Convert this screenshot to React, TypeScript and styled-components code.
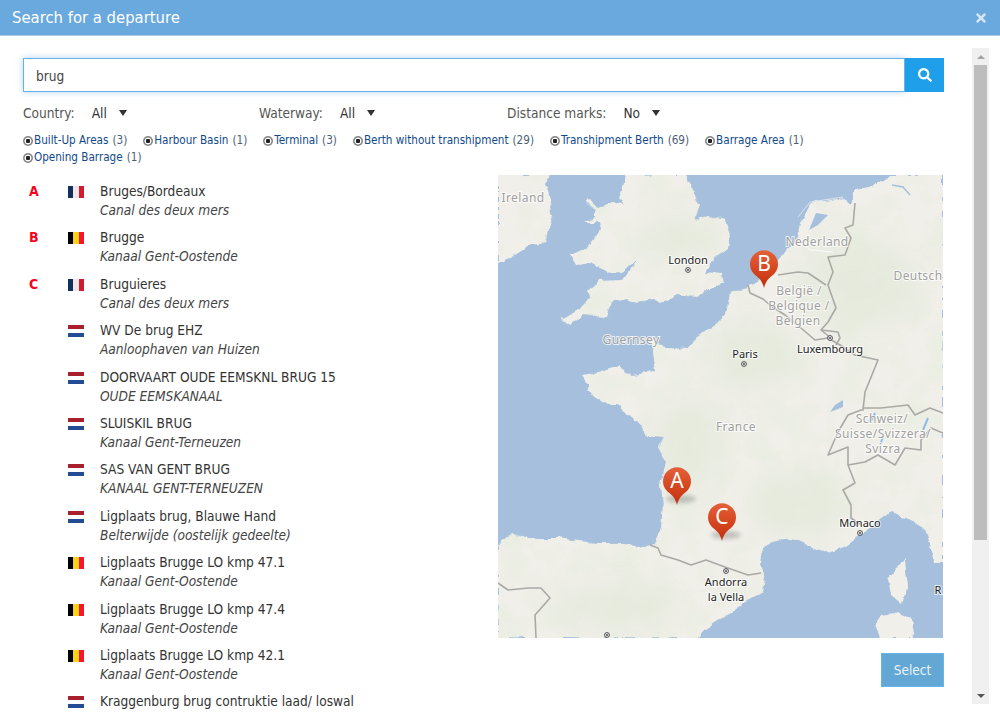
import React, { FC } from "react";
import styled, { createGlobalStyle } from "styled-components";
import { FaSearch, FaTimes } from "react-icons/fa";

const GlobalStyle = createGlobalStyle`
  html, body {
    margin: 0;
    padding: 0;
    height: 100%;
    background: #fff;
    overflow: hidden;
  }
  body {
    font-family: "DejaVu Sans Condensed", "DejaVu Sans", sans-serif;
    font-stretch: condensed;
    color: #333;
  }
`;

const Modal = styled.div`
  height: 722px;
  display: flex;
  flex-direction: column;
  overflow: hidden;
`;

const Header = styled.div`
  flex: none;
  height: 35px;
  border-bottom: 1px solid #a9cbe9;
  background: #6aa9de;
  display: flex;
  align-items: center;
  justify-content: space-between;
  padding: 0 12px;
  color: #fff;
  font-size: 16.5px;
`;

const Close = styled.span`
  display: flex;
  color: #d6e6f5;
  font-size: 14px;
`;

const Body = styled.div`
  flex: 1;
  display: flex;
  min-height: 0;
`;

const Main = styled.div`
  width: 921px;
  margin-left: 23px;
  padding-top: 22px;
`;

const Scrollbar = styled.div`
  width: 17px;
  height: 656px;
  margin: 12px 0 0 28px;
  background: #f0f0f0;
  display: flex;
  flex-direction: column;
  align-items: center;
`;

const ScrollArrow = styled.div<{ $up?: boolean }>`
  flex: none;
  height: 17px;
  width: 100%;
  display: flex;
  align-items: center;
  justify-content: center;

  &::before {
    content: "";
    border-left: 4px solid transparent;
    border-right: 4px solid transparent;
    ${(p) =>
      p.$up ? "border-bottom: 4px solid #a3a3a3;" : "border-top: 4px solid #555;"}
  }
`;

const ScrollThumb = styled.div`
  flex: none;
  width: 13px;
  height: 475px;
  background: #bdbdbd;
`;

const ScrollTrack = styled.div`
  flex: 1;
`;

const SearchRow = styled.div`
  display: flex;
  height: 34px;
`;

const SearchInput = styled.input`
  flex: 1;
  min-width: 0;
  box-sizing: border-box;
  height: 34px;
  padding: 1px 12px 0;
  border: 1px solid #6cb0ea;
  outline: none;
  box-shadow: 0 0 6px rgba(108, 176, 234, 0.55);
  font: inherit;
  font-size: 13.6px;
  color: #444;
`;

const SearchButton = styled.button`
  flex: none;
  width: 39px;
  height: 34px;
  border: none;
  padding: 0;
  background: #1f9fe9;
  color: #fff;
  font-size: 14px;
  display: flex;
  align-items: center;
  justify-content: center;
`;

const Filters = styled.div`
  display: flex;
  margin-top: 11px;
  height: 20px;
  align-items: center;
  font-size: 13.6px;
`;

const Filter = styled.div<{ $width: number }>`
  width: ${(p) => p.$width}px;
  display: flex;
  align-items: center;
`;

const FilterLabel = styled.span`
  color: #555;
  margin-right: 17px;
`;

const FilterValue = styled.span`
  color: #333;
  margin-right: 12px;
`;

const Caret = styled.span`
  border-left: 4px solid transparent;
  border-right: 4px solid transparent;
  border-top: 6px solid #333;
`;

const Tags = styled.div`
  display: flex;
  flex-wrap: wrap;
  margin-top: 9px;
  font-size: 11.6px;
  line-height: 17px;
  color: #4a6078;
`;

const Tag = styled.span`
  display: flex;
  align-items: center;
  margin-right: 16px;
`;

const Radio = styled.span`
  width: 10px;
  height: 10px;
  margin-right: 1px;
  border-radius: 50%;
  background: radial-gradient(circle, #222 0 2px, #fff 2.5px 3.2px, #888 3.7px);
`;

const TagName = styled.span`
  color: #114a8a;
  margin-right: 4px;
`;

const Results = styled.div`
  display: flex;
  margin-top: 9px;
`;

const List = styled.div`
  width: 475px;
  padding-top: 7px;
`;

const Row = styled.div`
  display: flex;
  padding-bottom: 8.4px;
  line-height: 19px;
  font-size: 13.6px;
`;

const Letter = styled.div`
  width: 45px;
  padding-left: 6px;
  box-sizing: border-box;
  font-weight: 700;
  font-size: 14px;
  color: #f5051e;
`;

const Flag = styled.div<{ $code: "fr" | "be" | "nl" }>`
  width: 16px;
  height: 12px;
  margin: 4px 16px 0 0;
  background: ${(p) =>
    p.$code === "fr"
      ? "linear-gradient(90deg, #0f2f5f 0 33%, #f4e4e6 33% 66%, #d01c30 66%)"
      : p.$code === "be"
      ? "linear-gradient(90deg, #000 0 33%, #fcd116 33% 66%, #f31830 66%)"
      : "linear-gradient(180deg, #a8202e 0 33%, #fff 33% 66%, #234c92 66%)"};
`;

const Name = styled.div`
  color: #333;
`;

const Waterway = styled.div`
  font-style: italic;
  color: #444;
`;

const Side = styled.div`
  width: 446px;
  display: flex;
  flex-direction: column;
  align-items: flex-end;
`;

const MapFrame = styled.svg`
  display: block;
  align-self: flex-start;
  width: 445px;
  height: 463px;
  background: #a5bfdd;
`;

const SelectButton = styled.button`
  width: 63px;
  height: 34px;
  margin-top: 15px;
  box-sizing: border-box;
  border: 1px solid #66b5e8;
  background: #63a8d4;
  color: #e8f2f8;
  font: inherit;
  font-size: 13.6px;
`;

const Land = styled.path`
  fill: #f0efe9;
`;

const Border = styled.path`
  fill: none;
  stroke: #aaa9a6;
  stroke-width: 1.6;
  stroke-linejoin: round;
`;

const Place = styled.text<{ $kind?: "country" | "city" }>`
  font-family: "Noto Sans", sans-serif;
  font-stretch: normal;
  font-size: ${(p) => (p.$kind === "city" ? "11px" : "12px")};
  letter-spacing: ${(p) => (p.$kind === "city" ? "0" : "0.4px")};
  fill: ${(p) => (p.$kind === "city" ? "#222" : "#a0a09e")};
  stroke: rgba(255, 255, 255, 0.75);
  stroke-width: 2px;
  paint-order: stroke;
  text-anchor: middle;
`;

const PinLetter = styled.text`
  font-family: "Noto Sans", sans-serif;
  font-stretch: normal;
  font-size: 21px;
  fill: #fff;
  text-anchor: middle;
`;

interface CityDotProps {
  x: number;
  y: number;
}

const CityDot: FC<CityDotProps> = ({ x, y }: CityDotProps) => (
  <g>
    <circle cx={x} cy={y} r={2.4} fill="#fff" stroke="#333" strokeWidth={0.9} />
    <circle cx={x} cy={y} r={0.9} fill="#333" />
  </g>
);

interface PinProps {
  x: number;
  y: number;
  letter: string;
  shadow?: boolean;
}

// x, y is the tip of the pin
const Pin: FC<PinProps> = ({ x, y, letter, shadow }: PinProps) => (
  <g transform={`translate(${x} ${y})`}>
    {shadow && <ellipse cx={4} cy={-6} rx={15} ry={4} fill="#555" opacity={0.3} filter="url(#soft)" />}
    <path
      d="M0 0 C-1.5 -6 -4 -9.5 -9 -13 A14 14 0 1 1 9 -13 C4 -9.5 1.5 -6 0 0 Z"
      fill="url(#pin)"
    />
    <PinLetter x={0} y={-17}>
      {letter}
    </PinLetter>
  </g>
);

const MAINLAND =
  "M393,0 L445,0 L445,387 L437,387 L433,373 L427,353 L413,345 L393,337 L383,343 L363,360 L347,372 L330,378 L317,373 L300,365 L283,363 L265,373 L262,387 L267,403 L265,417 L250,425 L233,437 L217,447 L207,455 L200,463 L0,463 L0,370 L13,358 L30,363 L60,363 L97,368 L123,368 L140,372 L157,368 L163,353 L165,330 L163,310 L168,287 L160,273 L165,262 L147,260 L143,250 L128,237 L120,230 L113,230 L100,225 L87,217 L92,210 L85,200 L100,197 L120,190 L133,200 L158,197 L153,163 L167,172 L190,173 L195,168 L197,160 L213,153 L228,140 L232,117 L250,112 L267,100 L280,87 L287,77 L300,63 L303,47 L313,28 L347,23 L353,28 L357,16 L375,10 L387,6 Z";

const BRITAIN =
  "M128,0 L125,13 L121,23 L127,29 L113,28 L100,33 L90,24 L87,28 L97,35 L97,42 L86,47 L100,47 L102,55 L97,63 L90,72 L73,80 L78,90 L93,88 L113,98 L123,97 L138,86 L125,105 L100,106 L97,112 L90,113 L92,122 L78,137 L63,145 L73,150 L85,140 L108,142 L113,127 L128,123 L138,128 L157,125 L163,128 L177,120 L200,122 L225,107 L223,99 L207,97 L217,83 L230,73 L232,57 L227,45 L210,41 L197,45 L202,30 L190,7 L187,0 Z";

const IRELAND =
  "M0,0 L53,0 L47,10 L50,20 L55,40 L50,57 L48,68 L33,70 L17,80 L0,88 Z";

const CORSICA =
  "M407,382 L408,397 L410,410 L405,430 L393,420 L390,403 L400,392 Z";

const SARDINIA = "M400,437 L413,443 L417,463 L383,463 L378,448 L383,440 Z";

const BORDERS = [
  "M250,110 L252,118 L265,124 L273,131 L287,140 L303,153 L317,165 L330,163 L342,170 L357,180 L380,185 L367,217 L365,235 L363,235 L350,240 L340,257 L330,280 L350,272 L350,290 L357,308 L345,315 L353,330 L353,343 L363,350",
  "M350,290 L367,287 L380,280 L397,290 L407,273 L423,275 L423,265 L433,253 L445,258",
  "M365,233 L383,233 L410,230 L417,240 L432,233 L445,238",
  "M357,28 L355,50 L347,53 L353,63 L347,80 L330,82 L335,97 L330,110 L338,133 L330,147 L323,155 L333,163",
  "M280,100 L300,97 L310,98 L328,110",
  "M323,155 L340,157 L342,163 L338,170",
  "M152,370 L160,373 L163,380 L180,385 L193,390 L208,385 L227,392 L250,400 L263,398",
  "M0,408 L10,415 L30,413 L43,413 L52,423 L37,440 L38,463",
];

const ROWS: { letter?: string; flag: "fr" | "be" | "nl"; name: string; waterway?: string }[] = [
  { letter: "A", flag: "fr", name: "Bruges/Bordeaux", waterway: "Canal des deux mers" },
  { letter: "B", flag: "be", name: "Brugge", waterway: "Kanaal Gent-Oostende" },
  { letter: "C", flag: "fr", name: "Bruguieres", waterway: "Canal des deux mers" },
  { flag: "nl", name: "WV De brug EHZ", waterway: "Aanloophaven van Huizen" },
  { flag: "nl", name: "DOORVAART OUDE EEMSKNL BRUG 15", waterway: "OUDE EEMSKANAAL" },
  { flag: "nl", name: "SLUISKIL BRUG", waterway: "Kanaal Gent-Terneuzen" },
  { flag: "nl", name: "SAS VAN GENT BRUG", waterway: "KANAAL GENT-TERNEUZEN" },
  { flag: "nl", name: "Ligplaats brug, Blauwe Hand", waterway: "Belterwijde (oostelijk gedeelte)" },
  { flag: "be", name: "Ligplaats Brugge LO kmp 47.1", waterway: "Kanaal Gent-Oostende" },
  { flag: "be", name: "Ligplaats Brugge LO kmp 47.4", waterway: "Kanaal Gent-Oostende" },
  { flag: "be", name: "Ligplaats Brugge LO kmp 42.1", waterway: "Kanaal Gent-Oostende" },
  { flag: "nl", name: "Kraggenburg brug contruktie laad/ loswal" },
];

const TAGS = [
  { name: "Built-Up Areas", count: 3 },
  { name: "Harbour Basin", count: 1 },
  { name: "Terminal", count: 3 },
  { name: "Berth without transhipment", count: 29 },
  { name: "Transhipment Berth", count: 69 },
  { name: "Barrage Area", count: 1 },
  { name: "Opening Barrage", count: 1 },
];

const App: FC = () => {
  return (
    <Modal>
      <GlobalStyle />
      <Header>
        Search for a departure
        <Close>
          <FaTimes />
        </Close>
      </Header>
      <Body>
        <Main>
          <SearchRow>
            <SearchInput defaultValue="brug" />
            <SearchButton>
              <FaSearch />
            </SearchButton>
          </SearchRow>
          <Filters>
            <Filter $width={236}>
              <FilterLabel>Country:</FilterLabel>
              <FilterValue>All</FilterValue>
              <Caret />
            </Filter>
            <Filter $width={248}>
              <FilterLabel>Waterway:</FilterLabel>
              <FilterValue>All</FilterValue>
              <Caret />
            </Filter>
            <Filter $width={200}>
              <FilterLabel>Distance marks:</FilterLabel>
              <FilterValue>No</FilterValue>
              <Caret />
            </Filter>
          </Filters>
          <Tags>
            {TAGS.map((tag) => (
              <Tag key={tag.name}>
                <Radio />
                <TagName>{tag.name}</TagName>({tag.count})
              </Tag>
            ))}
          </Tags>
          <Results>
            <List>
              {ROWS.map((row) => (
                <Row key={row.name}>
                  <Letter>{row.letter}</Letter>
                  <Flag $code={row.flag} />
                  <div>
                    <Name>{row.name}</Name>
                    {row.waterway && <Waterway>{row.waterway}</Waterway>}
                  </div>
                </Row>
              ))}
            </List>
            <Side>
              <MapFrame viewBox="0 0 445 463">
                <defs>
                  <clipPath id="land">
                    <path d={MAINLAND} />
                    <path d={BRITAIN} />
                    <path d={IRELAND} />
                  </clipPath>
                  <filter id="coast" x="-5%" y="-5%" width="110%" height="110%">
                    <feTurbulence type="fractalNoise" baseFrequency="0.09" numOctaves={3} seed={4} />
                    <feDisplacementMap in="SourceGraphic" scale={7} xChannelSelector="R" yChannelSelector="G" />
                  </filter>
                  <filter id="blur" x="-30%" y="-30%" width="160%" height="160%">
                    <feGaussianBlur stdDeviation="12" />
                  </filter>
                  <filter id="mottle" x="0" y="0" width="100%" height="100%">
                    <feTurbulence type="fractalNoise" baseFrequency="0.035" numOctaves={4} seed={9} />
                    <feColorMatrix
                      type="matrix"
                      values="0 0 0 0 0.78  0 0 0 0 0.85  0 0 0 0 0.72  0 0 0 2.6 -1.15"
                    />
                  </filter>
                  <filter id="soft" x="-30%" y="-60%" width="160%" height="220%">
                    <feGaussianBlur stdDeviation="2" />
                  </filter>
                  <linearGradient id="pin" x1="0" y1="0" x2="0" y2="1">
                    <stop offset="0" stopColor="#e4603a" />
                    <stop offset="0.6" stopColor="#d2421c" />
                    <stop offset="1" stopColor="#c02f0c" />
                  </linearGradient>
                </defs>
                <g filter="url(#coast)">
                  <Land d={MAINLAND} />
                  <Land d={BRITAIN} />
                  <Land d={IRELAND} />
                  <Land d={CORSICA} />
                  <Land d={SARDINIA} />
                </g>
                <g clipPath="url(#land)">
                  <rect x={0} y={0} width={445} height={463} filter="url(#mottle)" opacity={0.55} />
                  <g fill="#e3e9da" filter="url(#blur)" opacity={0.7}>
                    <ellipse cx={180} cy={60} rx={35} ry={22} />
                    <ellipse cx={255} cy={180} rx={45} ry={35} />
                    <ellipse cx={300} cy={330} rx={45} ry={35} />
                    <ellipse cx={190} cy={270} rx={35} ry={45} />
                    <ellipse cx={360} cy={110} rx={60} ry={45} />
                    <ellipse cx={120} cy={430} rx={60} ry={22} />
                  </g>
                </g>
                <path d="M300,42 L312,27 L345,22" fill="none" stroke="#d8e4ee" strokeWidth={1} />
                <path d="M311,55 L320,50 L330,40 L318,38 Z" fill="#a5bfdd" />
                <path d="M301,63 L312,75 L335,77" fill="none" stroke="#fff" strokeWidth={0.8} />
                <path d="M394,10 L405,12 L412,20" fill="none" stroke="#a5bfdd" strokeWidth={1.4} />
                <path d="M345,225 L337,230 L332,237 L345,232 Z" fill="#a5bfdd" />
                <path d="M377,238 L374,245 L370,246 M385,262 L382,270 M430,243 L425,255" fill="none" stroke="#8bbfe8" strokeWidth={2} />
                <path d="M138,86 L128,96" fill="none" stroke="#a5bfdd" strokeWidth={1} />
                {BORDERS.map((d) => (
                  <Border key={d} d={d} />
                ))}
                <Place x={25} y={27}>Ireland</Place>
                <Place x={133} y={169}>Guernsey</Place>
                <Place x={319} y={71}>Nederland</Place>
                <Place x={420} y={105}>Deutsch</Place>
                <Place x={301} y={120}>België /</Place>
                <Place x={301} y={135}>Belgique /</Place>
                <Place x={300} y={150}>Belgien</Place>
                <Place x={238} y={256}>France</Place>
                <Place x={384} y={248}>Schweiz/</Place>
                <Place x={385} y={263}>Suisse/Svizzera/</Place>
                <Place x={385} y={278}>Svizra</Place>
                <Place $kind="city" x={190} y={89}>London</Place>
                <CityDot x={190} y={95} />
                <Place $kind="city" x={247} y={183}>Paris</Place>
                <CityDot x={246} y={189} />
                <CityDot x={332} y={163} />
                <Place $kind="city" x={332} y={178}>Luxembourg</Place>
                <Place $kind="city" x={362} y={352}>Monaco</Place>
                <CityDot x={362} y={358} />
                <CityDot x={228} y={396} />
                <Place $kind="city" x={228} y={411}>Andorra</Place>
                <Place $kind="city" x={228} y={426}>la Vella</Place>
                <CityDot x={109} y={460} />
                <Place $kind="city" x={440} y={419}>R</Place>
                <Pin x={266} y={113} letter="B" />
                <Pin x={179} y={330} letter="A" shadow />
                <Pin x={224} y={366} letter="C" shadow />
              </MapFrame>
              <SelectButton>Select</SelectButton>
            </Side>
          </Results>
        </Main>
        <Scrollbar>
          <ScrollArrow $up />
          <ScrollThumb />
          <ScrollTrack />
          <ScrollArrow />
        </Scrollbar>
      </Body>
    </Modal>
  );
};

export default App;
